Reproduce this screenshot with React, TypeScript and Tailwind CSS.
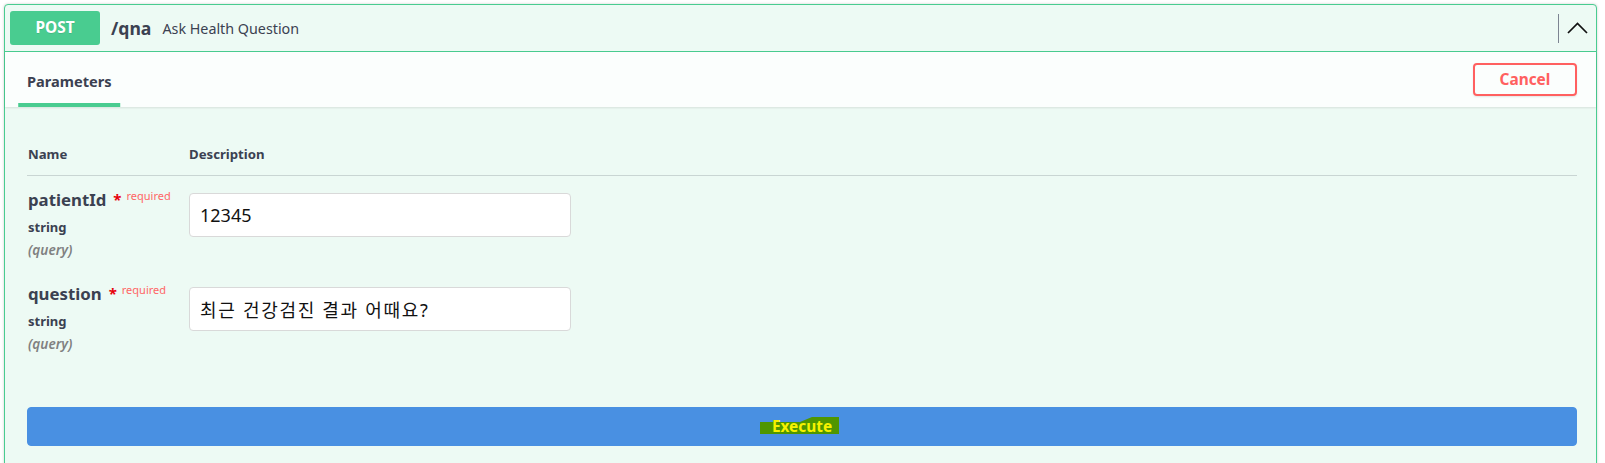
import { useState } from 'react'

const params = [
  { name: 'patientId', type: 'string', value: '12345', wide: false },
  { name: 'question', type: 'string', value: '최근 건강검진 결과 어때요?', wide: true },
]

export default function App() {
  const [values, setValues] = useState(params.map(p => p.value))

  return (
    <div className="min-h-screen bg-white pt-[4px] pl-[4px] font-['Noto_Sans','Noto_Sans_CJK_KR',sans-serif] text-[#3b4151]">
      <div className="w-[1593px] border border-[#49cc90] rounded-[4px] bg-[#edfaf4] shadow-[0_0_3px_rgba(0,0,0,0.19)]">
        {/* Summary */}
        <div className="flex items-center px-[5px] pt-[6px] pb-[6px] border-b border-[#49cc90]">
          <span className="w-[90px] h-[34px] rounded-[3px] bg-[#49cc90] text-white font-bold text-[15.4px] flex items-center justify-center [text-shadow:0_1px_0_rgba(0,0,0,0.1)]">
            POST
          </span>
          <span className="px-[11px] pt-[2px] text-[17.6px] font-bold leading-none">/qna</span>
          <span className="pt-[2px] text-[14.3px] leading-none">Ask Health Question</span>
          <div className="ml-auto flex items-center">
            <div className="w-px h-[29px] bg-[#7d8492]" />
            <button className="pl-[8px] pr-[3px] flex items-center">
              <svg width="21" height="12" viewBox="0 0 21 12" fill="none">
                <polyline points="1,11 10.5,1.5 20,11" stroke="#111" strokeWidth="1.7" />
              </svg>
            </button>
          </div>
        </div>

        {/* Section header */}
        <div className="flex items-center justify-between min-h-[55px] pl-[22px] pr-[19px] bg-white/80 shadow-[0_1px_2px_rgba(0,0,0,0.1)]">
          <div className="relative self-stretch flex items-center pt-[4px]">
            <h4 className="text-[14.6px] font-bold">Parameters</h4>
            <span className="absolute bottom-0 left-1/2 -translate-x-1/2 w-[120%] h-[4px] bg-[#49cc90]" />
          </div>
          <button className="w-[104px] h-[33px] pt-[1px] border-2 border-[#ff6060] rounded-[4px] text-[#ff6060] font-bold text-[15.4px] shadow-[0_1px_2px_rgba(0,0,0,0.1)]">
            Cancel
          </button>
        </div>

        {/* Parameters body */}
        <div className="pl-[22px] pr-[19px] pb-[20px]">
          <div className="flex pt-[39px] pb-[12px] border-b border-[rgba(59,65,81,0.2)] text-[13.2px] font-bold leading-[17px]">
            <div className="w-[162px] pl-[1px]">Name</div>
            <div>Description</div>
          </div>

          {params.map((p, i) => (
            <div key={p.name} className="flex pt-[12px] pb-[11px]">
              <div className="w-[162px] pl-[1px]">
                <div className="h-[24px] flex items-center whitespace-nowrap">
                  <span className="text-[16.8px] font-bold leading-none">{p.name}</span>
                  <span className="ml-[7px] text-[15px] font-bold leading-none text-red-600 relative -top-[1px]">*</span>
                  <span className="relative -top-[5px] px-[5px] text-[11px] leading-none text-[#f66]">required</span>
                </div>
                <div className="mt-[6px] h-[18px] flex items-center text-[13px] font-bold leading-none">{p.type}</div>
                <div className="mt-[5px] h-[18px] flex items-center text-[13.6px] font-semibold italic leading-none text-[#808080]">(query)</div>
              </div>
              <div>
                <input
                  value={values[i]}
                  onChange={e => setValues(values.map((v, j) => (j === i ? e.target.value : v)))}
                  className={`mt-[5px] w-[382px] h-[44px] border border-[#d9d9d9] rounded-[4px] bg-white px-[10px] text-[18px] text-[#111] outline-none ${
                    p.wide ? 'tracking-[1.7px]' : ''
                  }`}
                />
              </div>
            </div>
          ))}

          <button className="mt-[43px] w-full h-[39px] rounded-[4px] bg-[#4990e2] border border-[#4990e2] text-white font-bold text-[15.4px] flex items-center justify-center">
            <span className="relative inline-block leading-none">
              <svg className="absolute -left-[12px] -top-[2px]" width="79" height="18" viewBox="0 0 79 18">
                <polygon points="0,5 40,5 52,0 79,0 79,17 0,17" fill="#4f9600" />
              </svg>
              <span className="relative text-[#f7f200]">Execute</span>
            </span>
          </button>
        </div>
      </div>
    </div>
  )
}
